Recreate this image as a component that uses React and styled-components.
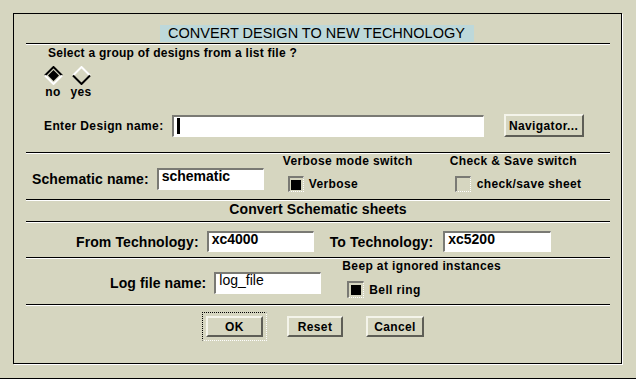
import React from 'react';
import styled, { createGlobalStyle } from 'styled-components';

const GlobalStyle = createGlobalStyle`
  html, body {
    margin: 0;
    padding: 0;
    background: #d6d6c0;
  }
  body {
    font-family: "Liberation Sans", Arial, sans-serif;
    color: #000;
  }
`;

const Screen = styled.div`
  width: 636px;
  height: 379px;
  box-sizing: border-box;
  padding: 13px;
  background: #d6d6c0;
  border-bottom: 1px solid #000;
`;

const Frame = styled.div`
  width: 609px;
  height: 351px;
  box-sizing: border-box;
  border: 1px solid #000;
  box-shadow: 1px 1px 0 #fff;
  padding: 0 11px 0 12px;
  display: flex;
  flex-direction: column;
`;

const TitleRow = styled.div`
  display: flex;
  justify-content: center;
  padding: 11px 0 1px 0;
`;

const Title = styled.div`
  background: #bdd8da;
  font-size: 14.5px;
  line-height: 17px;
  padding: 0 9px 0 8px;
  margin-left: -2px;
`;

const Rule = styled.div`
  height: 0;
  border-top: 1px solid #000;
  border-bottom: 1px solid #fff;
`;

const Section = styled.div`
  height: ${p => p.$h}px;
  box-sizing: border-box;
  display: flex;
  flex-direction: ${p => (p.$column ? 'column' : 'row')};
  align-items: flex-start;
`;

const Text = styled.div`
  font-weight: bold;
  font-size: ${p => p.$size || 12}px;
  line-height: ${p => p.$lh || 14}px;
  letter-spacing: ${p => (p.$size && p.$size > 13 ? 0.1 : 0.38)}px;
  white-space: nowrap;
`;

const Prompt = styled(Text)`
  margin: 1px 0 0 22px;
  letter-spacing: 0.25px;
`;

const RadioGroup = styled.div`
  display: flex;
  gap: 2px;
  margin: 6px 0 0 14px;
`;

const RadioOption = styled.div`
  width: 26px;
  display: flex;
  flex-direction: column;
  align-items: center;
  gap: 1px;
`;

const FieldRow = styled.div`
  display: flex;
  align-items: center;
  gap: ${p => p.$gap || 8}px;
  margin: ${p => p.$m || '0'};
`;

const Field = styled.div`
  width: ${p => p.$w}px;
  height: ${p => p.$h || 22}px;
  box-sizing: border-box;
  background: #fff;
  border-top: 2px solid #7a7a74;
  border-left: 2px solid #7a7a74;
  border-bottom: 1px dotted #fff;
  border-right: 1px dotted #fff;
  padding: 0 0 0 ${p => p.$pl || 3}px;
  font-size: 14px;
  line-height: 13px;
  font-weight: ${p => (p.$normal ? 'normal' : 'bold')};
  display: flex;
  align-items: flex-start;
`;

const Caret = styled.span`
  width: 3px;
  height: 16px;
  margin-top: 1px;
  background: #000;
`;

const Button = styled.div`
  width: ${p => p.$w}px;
  height: ${p => p.$h || 21}px;
  margin-left: ${p => p.$ml || 0}px;
  box-sizing: border-box;
  border-top: 2px solid #f4f4ea;
  border-left: 2px solid #f4f4ea;
  border-bottom: 2px solid #5e5e56;
  border-right: 2px solid #5e5e56;
  display: flex;
  align-items: center;
  justify-content: center;
  font-weight: bold;
  font-size: 12px;
  letter-spacing: 0.38px;
`;

const DefaultRing = styled.div`
  padding: 3px;
  border-top: 1px dotted #000;
  border-left: 1px dotted #000;
  border-bottom: 1px dotted #fff;
  border-right: 1px dotted #fff;
`;

const SwitchColumn = styled.div`
  width: ${p => p.$w || 'auto'};
  display: flex;
  flex-direction: column;
  margin: ${p => p.$m || '0'};
`;

const ToggleRow = styled.div`
  display: flex;
  align-items: center;
  gap: ${p => p.$gap || 5}px;
  margin: 8px 0 0 5px;
`;

const Check = styled.div`
  width: ${p => p.$s || 16}px;
  height: ${p => p.$s || 16}px;
  box-sizing: border-box;
  border-top: 2px solid #7a7a74;
  border-left: 2px solid #7a7a74;
  border-bottom: 1px dotted #fff;
  border-right: 1px dotted #fff;
  display: flex;
  align-items: center;
  justify-content: center;
  &::after {
    content: '';
    width: 10px;
    height: 10px;
    background: ${p => (p.$on ? '#000' : 'transparent')};
  }
`;

const Centered = styled(Text)`
  flex: 1;
  text-align: center;
`;

const ButtonRow = styled.div`
  display: flex;
  align-items: center;
  margin: 6px 0 0 176px;
`;

const Diamond = ({ on }) => (
  <svg width="19" height="19" viewBox="0 0 19 19">
    {on && <polygon points="9.5,4 15,9.5 9.5,15 4,9.5" fill="#000" />}
    <polyline
      points="1,9.5 9.5,1 18,9.5"
      fill="none"
      stroke={on ? '#000' : '#fff'}
      strokeWidth="2"
    />
    <polyline
      points="1,9.5 9.5,18 18,9.5"
      fill="none"
      stroke={on ? '#fff' : '#000'}
      strokeWidth="2"
    />
  </svg>
);

const App = () => {
  return (
    <>
      <GlobalStyle />
      <Screen>
        <Frame>
          <TitleRow>
            <Title>CONVERT DESIGN TO NEW TECHNOLOGY</Title>
          </TitleRow>
          <Rule />

          <Section $h={107} $column>
            <Prompt>Select a group of designs from a list file ?</Prompt>
            <RadioGroup>
              <RadioOption>
                <Diamond on />
                <Text $lh={13}>no</Text>
              </RadioOption>
              <RadioOption>
                <Diamond />
                <Text $lh={13}>yes</Text>
              </RadioOption>
            </RadioGroup>
            <FieldRow $m="15px 0 0 18px">
              <Text>Enter Design name:</Text>
              <Field $w={312}>
                <Caret />
              </Field>
              <Button $w={80} $h={23} $ml={12}>Navigator...</Button>
            </FieldRow>
          </Section>
          <Rule />

          <Section $h={45}>
            <FieldRow $m="14px 0 0 6px">
              <Text $size={14} $lh={16}>Schematic name:</Text>
              <Field $w={107}>schematic</Field>
            </FieldRow>
            <SwitchColumn $w="167px" $m="0 0 0 19px">
              <Text>Verbose mode switch</Text>
              <ToggleRow>
                <Check $on />
                <Text>Verbose</Text>
              </ToggleRow>
            </SwitchColumn>
            <SwitchColumn>
              <Text>Check &amp; Save switch</Text>
              <ToggleRow $gap={6}>
                <Check />
                <Text>check/save sheet</Text>
              </ToggleRow>
            </SwitchColumn>
          </Section>
          <Rule />

          <Section $h={20}>
            <Centered $size={14} $lh={16}>Convert Schematic sheets</Centered>
          </Section>
          <Rule />

          <Section $h={34}>
            <FieldRow $m="8px 0 0 50px">
              <Text $size={14} $lh={16}>From Technology:</Text>
              <Field $w={107} $h={21}>xc4000</Field>
            </FieldRow>
            <FieldRow $m="8px 0 0 16px" $gap={10}>
              <Text $size={14} $lh={16}>To Technology:</Text>
              <Field $w={108} $h={21}>xc5200</Field>
            </FieldRow>
          </Section>
          <Rule />

          <Section $h={45}>
            <FieldRow $m="13px 0 0 84px">
              <Text $size={14} $lh={16}>Log file name:</Text>
              <Field $w={107} $normal>log_file</Field>
            </FieldRow>
            <SwitchColumn $m="0 0 0 21px">
              <Text>Beep at ignored instances</Text>
              <ToggleRow>
                <Check $on $s={17} />
                <Text>Bell ring</Text>
              </ToggleRow>
            </SwitchColumn>
          </Section>
          <Rule />

          <Section $h={56}>
            <ButtonRow>
              <DefaultRing>
                <Button $w={57}>OK</Button>
              </DefaultRing>
              <Button $w={56} $ml={20}>Reset</Button>
              <Button $w={58} $ml={23}>Cancel</Button>
            </ButtonRow>
          </Section>
        </Frame>
      </Screen>
    </>
  );
};

export default App;
